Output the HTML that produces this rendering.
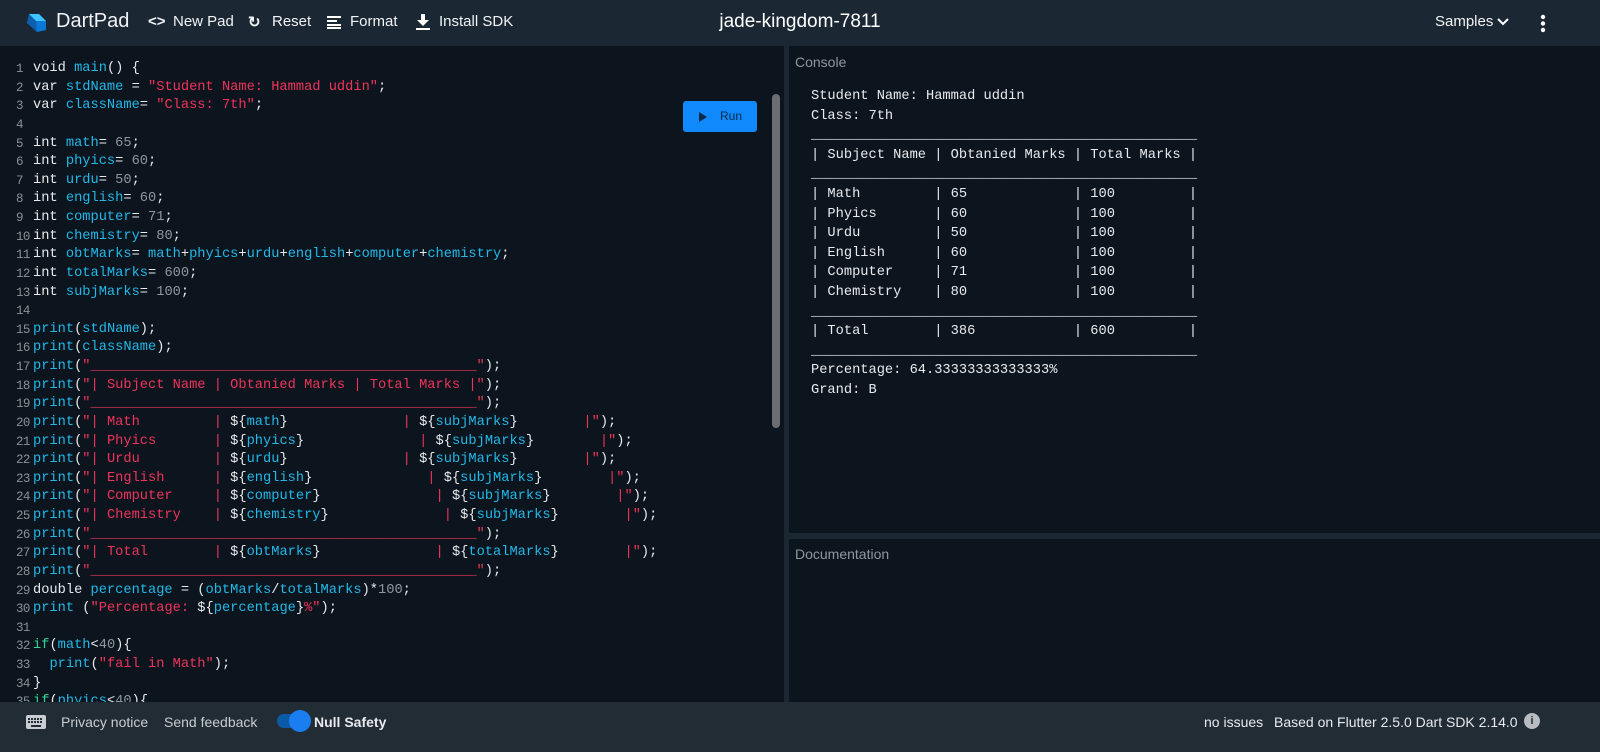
<!DOCTYPE html>
<html><head><meta charset="utf-8"><style>
*{margin:0;padding:0;box-sizing:border-box}
body{width:1600px;height:752px;background:#0c151e;overflow:hidden;font-family:"Liberation Sans",sans-serif;position:relative}
.hdr{position:absolute;left:0;top:0;width:1600px;height:46px;background:#1b2733;color:#fff}
.hdr .it{position:absolute;top:13px;font-size:15px;color:#f1f3f4}
.title{position:absolute;left:0;width:1600px;top:11px;text-align:center;font-size:19px;color:#fff}
.ed{position:absolute;left:0;top:46px;width:784px;height:656px;background:#0c151e;overflow:hidden}
pre{font-family:"Liberation Mono",monospace;font-size:13.7px;line-height:18.62px;color:#e8eaed}
.code{position:absolute;left:33px;top:60px}
.lns{position:absolute;left:16px;top:60px;color:#8a9096;font-size:12.5px;letter-spacing:-0.6px}
.v{color:#22b8e8}.s{color:#f0335a}.n{color:#8f979e}.g{color:#2ed690}
.run{position:absolute;left:683px;top:55px;width:74px;height:31px;background:#0f89fc;border-radius:3px;color:#0c2a48;font-size:12px}
.sb{position:absolute;left:772px;top:48px;width:8px;height:334px;background:#6a6e72;border-radius:4px}
.vdiv{position:absolute;left:784px;top:46px;width:5px;height:656px;background:#1b2733}
.hdiv{position:absolute;left:789px;top:533px;width:811px;height:6px;background:#1b2733}
.lbl{position:absolute;font-size:14px;color:#8f979e}
.con{position:absolute;left:811px;top:87px;line-height:19.6px;font-size:13.7px}
.ftr{position:absolute;left:0;top:702px;width:1600px;height:50px;background:#212c35;color:#e8eaed;font-size:14px}
.ftr span{position:absolute;top:12px}
</style></head><body>
<div class="hdr">
<svg style="position:absolute;left:24px;top:11px" width="24" height="24" viewBox="0 0 24 24"><path d="M5 3 L15 3 L22 10 L22 19 L13 21 L3 12 Z" fill="#0a78d8"/><path d="M5 3 L15 3 L22 10 L12 10 Z" fill="#40c4ff"/><path d="M3 12 L5 3 L12 10 L13 21Z" fill="#0d5fae"/></svg>
<span class="it" style="left:56px;top:10px;font-size:20px">DartPad</span>
<span class="it" style="left:148px;font-weight:bold">&lt;&gt;</span>
<span class="it" style="left:173px">New Pad</span>
<span class="it" style="left:248px;font-weight:bold">↻</span>
<span class="it" style="left:272px">Reset</span>
<svg style="position:absolute;left:327px;top:16px" width="14" height="13"><rect y="0" width="14" height="2" fill="#fff"/><rect y="4" width="10" height="2" fill="#fff"/><rect y="8" width="14" height="2" fill="#fff"/><rect y="11" width="14" height="2" fill="#fff"/></svg>
<span class="it" style="left:350px">Format</span>
<svg style="position:absolute;left:416px;top:14px" width="14" height="16"><path d="M5 0h4v6h4l-6 6-6-6h4z" fill="#fff"/><rect y="14" width="14" height="2" fill="#fff"/></svg>
<span class="it" style="left:439px">Install SDK</span>
<div class="title">jade-kingdom-7811</div>
<span class="it" style="left:1435px">Samples</span>
<svg style="position:absolute;left:1497px;top:18px" width="12" height="8"><path d="M1 1l5 5 5-5" stroke="#fff" stroke-width="2" fill="none"/></svg>
<svg style="position:absolute;left:1540px;top:14px" width="6" height="20"><circle cx="3" cy="3" r="2.2" fill="#fff"/><circle cx="3" cy="9.5" r="2.2" fill="#fff"/><circle cx="3" cy="16" r="2.2" fill="#fff"/></svg>
</div>
<div class="ed">
<pre class="lns" style="top:14px">1
2
3
4
5
6
7
8
9
10
11
12
13
14
15
16
17
18
19
20
21
22
23
24
25
26
27
28
29
30
31
32
33
34
35</pre>
<pre class="code" style="top:14px">void <span class="v">main</span>() {
var <span class="v">stdName</span> = <span class="s">"Student Name: Hammad uddin"</span>;
var <span class="v">className</span>= <span class="s">"Class: 7th"</span>;

int <span class="v">math</span>= <span class="n">65</span>;
int <span class="v">phyics</span>= <span class="n">60</span>;
int <span class="v">urdu</span>= <span class="n">50</span>;
int <span class="v">english</span>= <span class="n">60</span>;
int <span class="v">computer</span>= <span class="n">71</span>;
int <span class="v">chemistry</span>= <span class="n">80</span>;
int <span class="v">obtMarks</span>= <span class="v">math</span>+<span class="v">phyics</span>+<span class="v">urdu</span>+<span class="v">english</span>+<span class="v">computer</span>+<span class="v">chemistry</span>;
int <span class="v">totalMarks</span>= <span class="n">600</span>;
int <span class="v">subjMarks</span>= <span class="n">100</span>;

<span class="v">print</span>(<span class="v">stdName</span>);
<span class="v">print</span>(<span class="v">className</span>);
<span class="v">print</span>(<span class="s">"_______________________________________________"</span>);
<span class="v">print</span>(<span class="s">"| Subject Name | Obtanied Marks | Total Marks |"</span>);
<span class="v">print</span>(<span class="s">"_______________________________________________"</span>);
<span class="v">print</span>(<span class="s">"| Math         | </span>${<span class="v">math</span>}<span class="s">              | </span>${<span class="v">subjMarks</span>}<span class="s">        |"</span>);
<span class="v">print</span>(<span class="s">"| Phyics       | </span>${<span class="v">phyics</span>}<span class="s">              | </span>${<span class="v">subjMarks</span>}<span class="s">        |"</span>);
<span class="v">print</span>(<span class="s">"| Urdu         | </span>${<span class="v">urdu</span>}<span class="s">              | </span>${<span class="v">subjMarks</span>}<span class="s">        |"</span>);
<span class="v">print</span>(<span class="s">"| English      | </span>${<span class="v">english</span>}<span class="s">              | </span>${<span class="v">subjMarks</span>}<span class="s">        |"</span>);
<span class="v">print</span>(<span class="s">"| Computer     | </span>${<span class="v">computer</span>}<span class="s">              | </span>${<span class="v">subjMarks</span>}<span class="s">        |"</span>);
<span class="v">print</span>(<span class="s">"| Chemistry    | </span>${<span class="v">chemistry</span>}<span class="s">              | </span>${<span class="v">subjMarks</span>}<span class="s">        |"</span>);
<span class="v">print</span>(<span class="s">"_______________________________________________"</span>);
<span class="v">print</span>(<span class="s">"| Total        | </span>${<span class="v">obtMarks</span>}<span class="s">              | </span>${<span class="v">totalMarks</span>}<span class="s">        |"</span>);
<span class="v">print</span>(<span class="s">"_______________________________________________"</span>);
double <span class="v">percentage</span> = (<span class="v">obtMarks</span>/<span class="v">totalMarks</span>)*<span class="n">100</span>;
<span class="v">print</span> (<span class="s">"Percentage: </span>${<span class="v">percentage</span>}<span class="s">%"</span>);

<span class="g">if</span>(<span class="v">math</span>&lt;<span class="n">40</span>){
  <span class="v">print</span>(<span class="s">"fail in Math"</span>);
}
<span class="g">if</span>(<span class="v">phyics</span>&lt;<span class="n">40</span>){</pre>
<div class="run"><svg style="position:absolute;left:16px;top:11px" width="8" height="10"><path d="M0 0L8 5L0 10Z" fill="#0c2a48"/></svg><span style="position:absolute;left:37px;top:8px">Run</span></div>
<div class="sb"></div>
</div>
<div class="vdiv"></div>
<div class="hdiv"></div>
<div class="lbl" style="left:795px;top:54px">Console</div>
<div class="lbl" style="left:795px;top:546px">Documentation</div>
<pre class="con">Student Name: Hammad uddin
Class: 7th
_______________________________________________
| Subject Name | Obtanied Marks | Total Marks |
_______________________________________________
| Math         | 65             | 100         |
| Phyics       | 60             | 100         |
| Urdu         | 50             | 100         |
| English      | 60             | 100         |
| Computer     | 71             | 100         |
| Chemistry    | 80             | 100         |
_______________________________________________
| Total        | 386            | 600         |
_______________________________________________
Percentage: 64.33333333333333%
Grand: B</pre>
<div class="ftr">
<svg style="position:absolute;left:26px;top:13px" width="20" height="14"><rect width="20" height="14" rx="2" fill="#c9cdd1"/><g fill="#212c35"><rect x="2" y="3" width="2" height="2"/><rect x="5" y="3" width="2" height="2"/><rect x="8" y="3" width="2" height="2"/><rect x="11" y="3" width="2" height="2"/><rect x="14" y="3" width="2" height="2"/><rect x="2" y="6" width="2" height="2"/><rect x="5" y="6" width="2" height="2"/><rect x="8" y="6" width="2" height="2"/><rect x="11" y="6" width="2" height="2"/><rect x="14" y="6" width="2" height="2"/><rect x="5" y="10" width="10" height="2"/></g></svg>
<span style="left:61px;color:#c9cdd1">Privacy notice</span>
<span style="left:164px;color:#c9cdd1">Send feedback</span>
<div style="position:absolute;left:277px;top:12px;width:34px;height:14px;border-radius:7px;background:#0c5aa6"></div>
<div style="position:absolute;left:289px;top:8px;width:22px;height:22px;border-radius:11px;background:#1a7ef0"></div>
<span style="left:314px;font-weight:bold">Null Safety</span>
<span style="left:1204px">no issues</span>
<span style="left:1274px">Based on Flutter 2.5.0 Dart SDK 2.14.0</span>
<div style="position:absolute;left:1524px;top:11px;width:16px;height:16px;border-radius:8px;background:#b8bcc0;color:#212c35;font-size:11px;font-weight:bold;text-align:center;line-height:16px">i</div>
</div>
</body></html>
